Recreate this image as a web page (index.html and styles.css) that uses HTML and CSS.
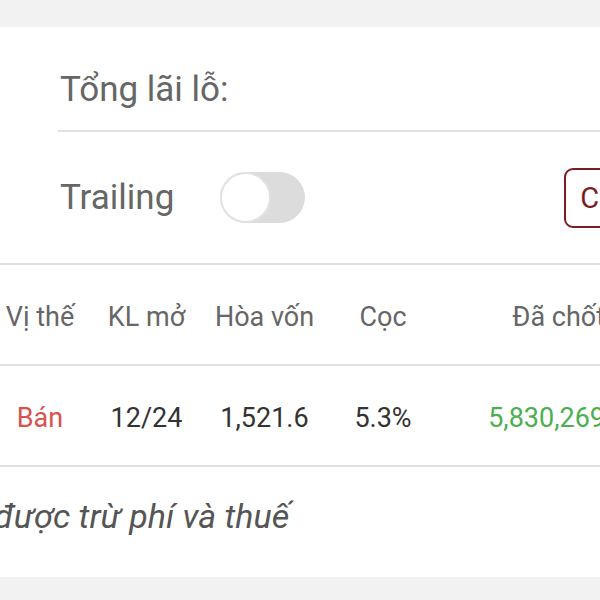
FILE: index.html
```html
<!DOCTYPE html>
<html lang="vi">
<head>
  <meta charset="UTF-8" />
  <meta name="viewport" content="width=device-width, initial-scale=1.0" />
  <title>Vị thế</title>
  <link rel="stylesheet" href="styles.css">
</head>
<body>
  <div class="band"></div>

  <div class="card">
    <div class="pnl-row">Tổng lãi lỗ:</div>

    <div class="trailing-row">
      <span class="label">Trailing</span>
      <div class="switch"><div class="knob"></div></div>
      <button class="btn-outline">Cài đặt</button>
    </div>

    <div class="grid head">
      <div>Vị thế</div>
      <div>KL mở</div>
      <div>Hòa vốn</div>
      <div>Cọc</div>
      <div class="last">Đã chốt</div>
    </div>
    <div class="grid data">
      <div class="sell">Bán</div>
      <div>12/24</div>
      <div>1,521.6</div>
      <div>5.3%</div>
      <div class="last profit">5,830,269</div>
    </div>

    <p class="note">được trừ phí và thuế</p>
  </div>

  <div class="band"></div>
</body>
</html>
```

FILE: styles.css
```css
body {
  margin: 0;
  font-family: Roboto, 'Noto Sans', sans-serif;
  background: #f2f2f2;
  width: 600px;
  height: 600px;
  overflow: hidden;
}
.band {
  height: 27px;
  background: #f2f2f2;
}
.card {
  background: #fff;
  height: 550px;
  overflow: hidden;
}
.label,
.pnl-row {
  font-size: 35px;
  color: #666;
}
.pnl-row {
  margin-left: 58px;
  padding: 42px 0 19px 2px;
  line-height: 42px;
  border-bottom: 2px solid #e0e0e0;
}
.trailing-row {
  display: flex;
  align-items: center;
  height: 131px;
  padding-left: 60px;
  border-bottom: 2px solid #e0e0e0;
  white-space: nowrap;
}
.switch {
  position: relative;
  flex: none;
  width: 85px;
  height: 51px;
  margin-left: 46px;
  border-radius: 26px;
  background: #dcdcdc;
}
.knob {
  position: absolute;
  left: 0;
  top: 0;
  width: 47px;
  height: 47px;
  border-radius: 50%;
  background: #fff;
  border: 2px solid #e2e2e2;
}
.btn-outline {
  flex: none;
  margin-left: 259px;
  height: 60px;
  padding: 0 14px;
  font-family: inherit;
  font-size: 29px;
  color: #7a1d22;
  background: #fff;
  border: 2px solid #7a1d22;
  border-radius: 9px;
}
.grid {
  display: grid;
  grid-template-columns: 80px 133px 103px 134px 155px;
  align-items: center;
  height: 95px;
  padding-top: 4px;
  border-bottom: 2px solid #e0e0e0;
  font-size: 27px;
  text-align: center;
  white-space: nowrap;
}
.grid .last {
  text-align: right;
}
.head {
  color: #666;
}
.data {
  color: #333;
}
.sell {
  color: #d9534f;
}
.profit {
  color: #4caf50;
}
.note {
  margin: 0 0 0 -6px;
  padding-top: 29px;
  font-size: 34px;
  font-style: italic;
  color: #555;
  white-space: nowrap;
}
```
